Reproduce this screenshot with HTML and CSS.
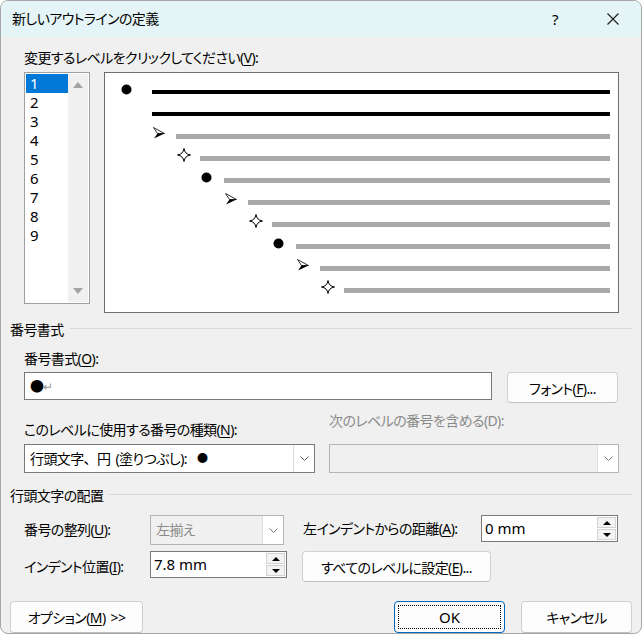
FILE: index.html
```html
<!DOCTYPE html>
<html lang="ja">
<head>
    <meta charset="UTF-8">
    <title>新しいアウトラインの定義</title>
    <link rel="stylesheet" href="styles.css">
</head>
<body>
    <div class="dialog">
        <!-- Title bar -->
        <div class="titlebar">
            <span class="title">新しいアウトラインの定義</span>
            <span class="help">?</span>
            <span class="close">
                <svg width="12" height="12" viewBox="0 0 12 12"><path d="M0.5 0.5 L11.5 11.5 M11.5 0.5 L0.5 11.5" stroke="#1a1a1a" stroke-width="1.1" fill="none"/></svg>
            </span>
        </div>

        <div class="content">
            <div class="group">
                <div class="label top-label">変更するレベルをクリックしてください(<u>V</u>):</div>

                <div class="level-row">
                    <!-- Level list -->
                    <div class="level-list">
                        <ul class="levels">
                            <li class="selected">1</li>
                            <li>2</li>
                            <li>3</li>
                            <li>4</li>
                            <li>5</li>
                            <li>6</li>
                            <li>7</li>
                            <li>8</li>
                            <li>9</li>
                        </ul>
                        <div class="scrollbar">
                            <span class="tri up"></span>
                            <span class="tri down"></span>
                        </div>
                    </div>

                    <!-- Preview -->
                    <div class="preview">
                        <div class="row" style="padding-left:16px">
                            <span class="mark first"><svg width="11" height="11" viewBox="0 0 11 11"><circle cx="5.5" cy="5.5" r="5"/></svg></span>
                            <span class="bar dark"></span>
                        </div>
                        <div class="row" style="padding-left:16px">
                            <span class="mark first"></span>
                            <span class="bar dark"></span>
                        </div>
                        <div class="row" style="padding-left:48px">
                            <span class="mark"><svg width="12" height="12" viewBox="0 0 12 12"><path d="M0.5 0.5 L11.5 6.5 L4.5 6.5 Z" fill="#fff" stroke="#000" stroke-width="0.8"/><path d="M4.5 6.5 L11.5 6.5 L1 11.5 Z" fill="#000"/></svg></span>
                            <span class="bar"></span>
                        </div>
                        <div class="row" style="padding-left:72px">
                            <span class="mark"><svg width="14" height="14" viewBox="0 0 14 14"><path d="M7 0.5 Q7.8 6.2 13.5 7 Q7.8 7.8 7 13.5 Q6.2 7.8 0.5 7 Q6.2 6.2 7 0.5 Z" fill="#fff" stroke="#000" stroke-width="1"/></svg></span>
                            <span class="bar"></span>
                        </div>
                        <div class="row" style="padding-left:96px">
                            <span class="mark"><svg width="11" height="11" viewBox="0 0 11 11"><circle cx="5.5" cy="5.5" r="5"/></svg></span>
                            <span class="bar"></span>
                        </div>
                        <div class="row" style="padding-left:120px">
                            <span class="mark"><svg width="12" height="12" viewBox="0 0 12 12"><path d="M0.5 0.5 L11.5 6.5 L4.5 6.5 Z" fill="#fff" stroke="#000" stroke-width="0.8"/><path d="M4.5 6.5 L11.5 6.5 L1 11.5 Z" fill="#000"/></svg></span>
                            <span class="bar"></span>
                        </div>
                        <div class="row" style="padding-left:144px">
                            <span class="mark"><svg width="14" height="14" viewBox="0 0 14 14"><path d="M7 0.5 Q7.8 6.2 13.5 7 Q7.8 7.8 7 13.5 Q6.2 7.8 0.5 7 Q6.2 6.2 7 0.5 Z" fill="#fff" stroke="#000" stroke-width="1"/></svg></span>
                            <span class="bar"></span>
                        </div>
                        <div class="row" style="padding-left:168px">
                            <span class="mark"><svg width="11" height="11" viewBox="0 0 11 11"><circle cx="5.5" cy="5.5" r="5"/></svg></span>
                            <span class="bar"></span>
                        </div>
                        <div class="row" style="padding-left:192px">
                            <span class="mark"><svg width="12" height="12" viewBox="0 0 12 12"><path d="M0.5 0.5 L11.5 6.5 L4.5 6.5 Z" fill="#fff" stroke="#000" stroke-width="0.8"/><path d="M4.5 6.5 L11.5 6.5 L1 11.5 Z" fill="#000"/></svg></span>
                            <span class="bar"></span>
                        </div>
                        <div class="row" style="padding-left:216px">
                            <span class="mark"><svg width="14" height="14" viewBox="0 0 14 14"><path d="M7 0.5 Q7.8 6.2 13.5 7 Q7.8 7.8 7 13.5 Q6.2 7.8 0.5 7 Q6.2 6.2 7 0.5 Z" fill="#fff" stroke="#000" stroke-width="1"/></svg></span>
                            <span class="bar"></span>
                        </div>
                    </div>
                </div>
            </div>

            <!-- Number format section -->
            <div class="section-head number-head">
                <span>番号書式</span>
                <span class="rule"></span>
            </div>
            <div class="group">
                <div class="label">番号書式(<u>O</u>):</div>
                <div class="format-row">
                    <div class="textbox format-box">●<span class="return">↵</span></div>
                    <button class="btn font-btn">フォント(<u>F</u>)...</button>
                </div>
                <div class="pair-row labels-row">
                    <div class="label col-left">このレベルに使用する番号の種類(<u>N</u>):</div>
                    <div class="label col-right disabled">次のレベルの番号を含める(D):</div>
                </div>
                <div class="pair-row combos-row">
                    <div class="combo col-left">
                        <span class="combo-text">行頭文字<span class="comma">、</span>円 (塗りつぶし):&nbsp;&nbsp;<span class="dot">●</span></span>
                        <span class="drop"><svg width="9" height="5" viewBox="0 0 9 5"><path d="M0.5 0.5 L4.5 4.5 L8.5 0.5" stroke="#555" fill="none"/></svg></span>
                    </div>
                    <div class="combo col-right off">
                        <span class="combo-text"></span>
                        <span class="drop"><svg width="9" height="5" viewBox="0 0 9 5"><path d="M0.5 0.5 L4.5 4.5 L8.5 0.5" stroke="#777" fill="none"/></svg></span>
                    </div>
                </div>
            </div>

            <!-- Bullet position section -->
            <div class="section-head place-head">
                <span>行頭文字の配置</span>
                <span class="rule"></span>
            </div>
            <div class="group">
                <div class="place-row">
                    <div class="label place-label">番号の整列(<u>U</u>):</div>
                    <div class="combo align-combo off">
                        <span class="combo-text">左揃え</span>
                        <span class="drop"><svg width="9" height="5" viewBox="0 0 9 5"><path d="M0.5 0.5 L4.5 4.5 L8.5 0.5" stroke="#777" fill="none"/></svg></span>
                    </div>
                    <div class="label dist-label">左インデントからの距離(<u>A</u>):</div>
                    <div class="spin">
                        <span class="spin-text">0 mm</span>
                        <span class="spin-btns">
                            <span class="spin-btn"><span class="tri-s up"></span></span>
                            <span class="spin-btn"><span class="tri-s down"></span></span>
                        </span>
                    </div>
                </div>
                <div class="place-row second">
                    <div class="label place-label">インデント位置(<u>I</u>):</div>
                    <div class="spin">
                        <span class="spin-text">7.8 mm</span>
                        <span class="spin-btns">
                            <span class="spin-btn"><span class="tri-s up"></span></span>
                            <span class="spin-btn"><span class="tri-s down"></span></span>
                        </span>
                    </div>
                    <button class="btn all-btn">すべてのレベルに設定(<u>E</u>)...</button>
                </div>
            </div>

            <!-- Footer buttons -->
            <div class="footer">
                <button class="btn option-btn">オプション(<u>M</u>) &gt;&gt;</button>
                <span class="spacer"></span>
                <button class="btn ok-btn"><span class="focus">OK</span></button>
                <button class="btn cancel-btn">キャンセル</button>
            </div>
        </div>
    </div>
</body>
</html>
```

FILE: styles.css
```css
/* Base */
* {
    box-sizing: border-box;
}

body {
    margin: 0;
    background: #ffffff;
    font-family: "Noto Sans", "Noto Sans CJK JP", sans-serif;
    font-size: 14px;
    letter-spacing: -0.6px;
    word-spacing: 2px;
    line-height: 20px;
    color: #000;
    font-feature-settings: "palt";
}

u {
    text-underline-offset: 2px;
}

/* Window frame */
.dialog {
    width: 642px;
    height: 634px;
    border: 1px solid #a6a6a6;
    border-radius: 8px;
    background: #f0f0f0;
    overflow: hidden;
}

/* Title bar */
.titlebar {
    height: 36px;
    background: #e5f4f6;
    display: flex;
    align-items: center;
    padding-left: 11px;
}

.title {
    flex: 1;
}

.help {
    width: 55px;
    font-size: 15px;
}

.close {
    width: 34px;
    display: flex;
    align-items: center;
}

/* Content area */
.content {
    padding: 0 9px;
}

.group {
    padding-left: 14px;
}

.label {
    height: 20px;
    white-space: nowrap;
}

.disabled {
    color: #8a8a8a;
}

.top-label {
    margin-top: 11px;
}

/* Level list + preview */
.level-row {
    display: flex;
    align-items: flex-start;
    margin-top: 4px;
}

.level-list {
    width: 66px;
    height: 232px;
    border: 1px solid #a0a0a0;
    background: #fff;
    display: flex;
    padding: 1px;
}

.levels {
    list-style: none;
    margin: 0;
    padding: 0;
    width: 42px;
    font-size: 15px;
    letter-spacing: 0;
}

.levels li {
    height: 19px;
    line-height: 19px;
    padding-left: 4px;
}

.levels li.selected {
    background: #0078d7;
    color: #fff;
}

.scrollbar {
    width: 20px;
    background: #f0f0f0;
    display: flex;
    flex-direction: column;
    justify-content: space-between;
    align-items: center;
    padding: 8px 0 8px;
}

.tri {
    width: 0;
    height: 0;
    border-left: 5px solid transparent;
    border-right: 5px solid transparent;
}

.tri.up {
    border-bottom: 6px solid #a3a3a3;
}

.tri.down {
    border-top: 6px solid #a3a3a3;
}

.preview {
    width: 515px;
    height: 241px;
    margin-left: 14px;
    border: 1px solid #6e6e6e;
    background: #fff;
    padding: 8px 8px 0 0;
}

.row {
    height: 22px;
    display: flex;
    align-items: center;
}

.mark {
    width: 23px;
    display: flex;
    align-items: center;
    margin-top: -6px;
}

.mark.first {
    width: 31px;
}

.bar {
    flex: 1;
    height: 5px;
    background: #a9a9a9;
}

.bar.dark {
    height: 4px;
    background: #000;
}

/* Section headings */
.section-head {
    display: flex;
    align-items: center;
    height: 20px;
}

.section-head .rule {
    flex: 1;
    height: 1px;
    background: #d9d9d9;
    margin: -3px 0 0 6px;
}

.number-head {
    margin-top: 7px;
}

.number-head + .group .label:first-child {
    margin-top: 9px;
}

.place-head {
    margin-top: 13px;
}

/* Inputs */
.format-row {
    display: flex;
    align-items: flex-start;
    margin-top: 3px;
}

.textbox {
    height: 28px;
    border: 1px solid #7a7a7a;
    background: #fff;
    padding: 0 5px;
    line-height: 26px;
}

.format-box {
    width: 468px;
}

.return {
    color: #9a9a9a;
    font-size: 12px;
}

.pair-row {
    display: flex;
}

.col-left {
    width: 291px;
}

.col-right {
    width: 290px;
    margin-left: 14px;
}

.labels-row {
    margin-top: 8px;
}

.combos-row {
    margin-top: 4px;
}

.combo {
    height: 29px;
    border: 1px solid #7a7a7a;
    background: #fff;
    display: flex;
    align-items: stretch;
}

.combo.off {
    border-color: #b4b4b4;
    background: #f0f0f0;
    color: #8a8a8a;
}

.combo-text {
    flex: 1;
    padding-left: 5px;
    line-height: 27px;
    white-space: nowrap;
}

.comma {
    font-feature-settings: normal;
}

.dot {
    font-size: 11px;
    position: relative;
    top: -2px;
}

.drop {
    width: 21px;
    background: #fff;
    border-left: 1px solid #dcdcdc;
    display: flex;
    align-items: center;
    justify-content: center;
}

/* Alignment rows */
.place-row {
    display: flex;
    align-items: center;
    margin-top: 9px;
}

.place-row.second {
    margin-top: 6px;
}

.place-label {
    width: 126px;
}

.align-combo {
    width: 134px;
    height: 30px;
}

.dist-label {
    width: 178px;
    margin-left: 19px;
    margin-top: -3px;
}

.spin {
    width: 137px;
    height: 27px;
    border: 1px solid #7a7a7a;
    background: #fff;
    display: flex;
    align-self: flex-start;
}

.spin-text {
    flex: 1;
    padding-left: 3px;
    line-height: 25px;
    font-size: 15px;
    letter-spacing: 0;
    word-spacing: 0;
}

.spin-btns {
    width: 20px;
    display: flex;
    flex-direction: column;
    padding: 1px 1px 1px 0;
    gap: 1px;
}

.spin-btn {
    flex: 1;
    background: #f3f3f3;
    border: 1px solid #d3d3d3;
    display: flex;
    align-items: center;
    justify-content: center;
}

.tri-s {
    width: 0;
    height: 0;
    border-left: 4px solid transparent;
    border-right: 4px solid transparent;
}

.tri-s.up {
    border-bottom: 4px solid #000;
}

.tri-s.down {
    border-top: 4px solid #000;
}

/* Buttons */
.btn {
    font-family: inherit;
    font-size: 14px;
    letter-spacing: -0.6px;
    word-spacing: 2px;
    font-feature-settings: "palt";
    color: #000;
    background: #fdfdfd;
    border: 1px solid #d0d0d0;
    border-bottom-color: #c0c0c0;
    border-radius: 4px;
    padding: 0;
    white-space: nowrap;
}

.font-btn {
    width: 111px;
    height: 31px;
    margin-left: 15px;
}

.all-btn {
    width: 189px;
    height: 31px;
    margin-left: 15px;
    align-self: flex-start;
}

.footer {
    display: flex;
    margin-top: 19px;
}

.spacer {
    flex: 1;
}

.option-btn {
    width: 133px;
    height: 32px;
}

.ok-btn {
    width: 111px;
    height: 32px;
    border: 1px solid #0067c0;
    padding: 3px;
    font-size: 15px;
    letter-spacing: 0;
}

.ok-btn .focus {
    display: block;
    height: 100%;
    border: 1px dotted #000;
    line-height: 22px;
}

.cancel-btn {
    width: 111px;
    height: 32px;
    margin-left: 16px;
}
```
